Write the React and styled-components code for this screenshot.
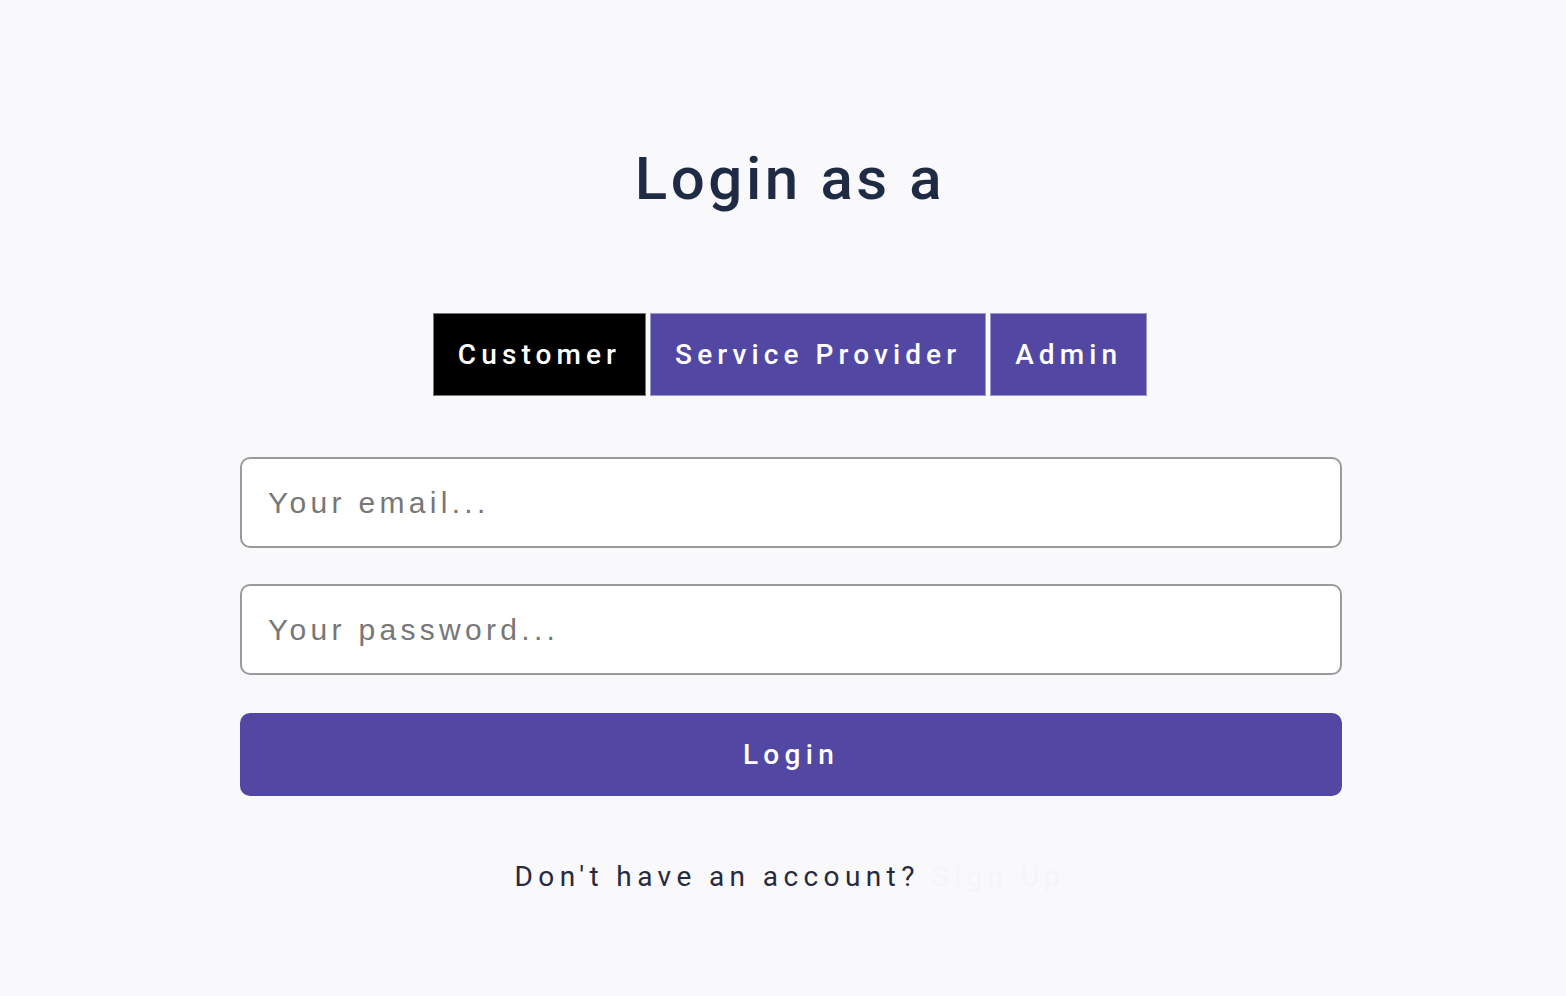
import React from 'react'
import styled, { createGlobalStyle } from 'styled-components'

const GlobalStyle = createGlobalStyle`
  body {
    margin: 0;
    background: #f9f9fb;
    font-family: Roboto, "Liberation Sans", sans-serif;
  }
`;

const Page = styled.div`
  display: flex;
  flex-direction: column;
  align-items: center;
  padding: 143px 0 0 14px;
  min-height: 996px;
  box-sizing: border-box;
`;

const Title = styled.h1`
  margin: 0;
  font-size: 60px;
  line-height: 72px;
  font-weight: 500;
  letter-spacing: 3.6px;
  color: #1f2a44;
`;

const Tabs = styled.div`
  display: flex;
  gap: 4px;
  margin-top: 98px;
`;

const Tab = styled.button`
  height: 83px;
  padding: 0 24px;
  border: 1px solid ${p => (p.active ? '#777' : '#9d98cf')};
  background: ${p => (p.active ? '#000' : '#5248a4')};
  color: #fff;
  font-family: Roboto, sans-serif;
  font-size: 28px;
  font-weight: 500;
  letter-spacing: 5.1px;
  cursor: pointer;
`;

const Form = styled.form`
  display: flex;
  flex-direction: column;
  gap: 36px;
  width: 1102px;
  margin: 61px 0 0 2px;
`;

const Input = styled.input`
  box-sizing: border-box;
  height: 91px;
  padding: 0 26px;
  border: 2px solid #9a9a9a;
  border-radius: 10px;
  background: #fff;
  font-family: "Liberation Sans", Arial, sans-serif;
  font-size: 30px;
  letter-spacing: 4.3px;
  color: #333;
  outline: none;

  &::placeholder {
    color: #777;
  }
`;

const Submit = styled.button`
  height: 83px;
  margin-top: 2px;
  border: none;
  border-radius: 10px;
  background: #5248a4;
  color: #fff;
  font-family: Roboto, sans-serif;
  font-size: 28px;
  font-weight: 500;
  letter-spacing: 5.3px;
  cursor: pointer;
`;

const Footer = styled.p`
  margin: 64px 0 0;
  font-size: 28px;
  letter-spacing: 5.4px;
  color: #262a3c;

  a {
    color: #f5f5f8;
    text-decoration: none;
  }
`;

function App() {
    return (
        <Page>
            <GlobalStyle />
            <Title>Login as a</Title>
            <Tabs>
                <Tab active>Customer</Tab>
                <Tab>Service Provider</Tab>
                <Tab>Admin</Tab>
            </Tabs>
            <Form onSubmit={e => e.preventDefault()}>
                <Input type="email" placeholder="Your email..." />
                <Input type="password" placeholder="Your password..." />
                <Submit type="submit">Login</Submit>
            </Form>
            <Footer>
                Don't have an account? <a href="#">Sign Up</a>
            </Footer>
        </Page>
    )
}

export default App
